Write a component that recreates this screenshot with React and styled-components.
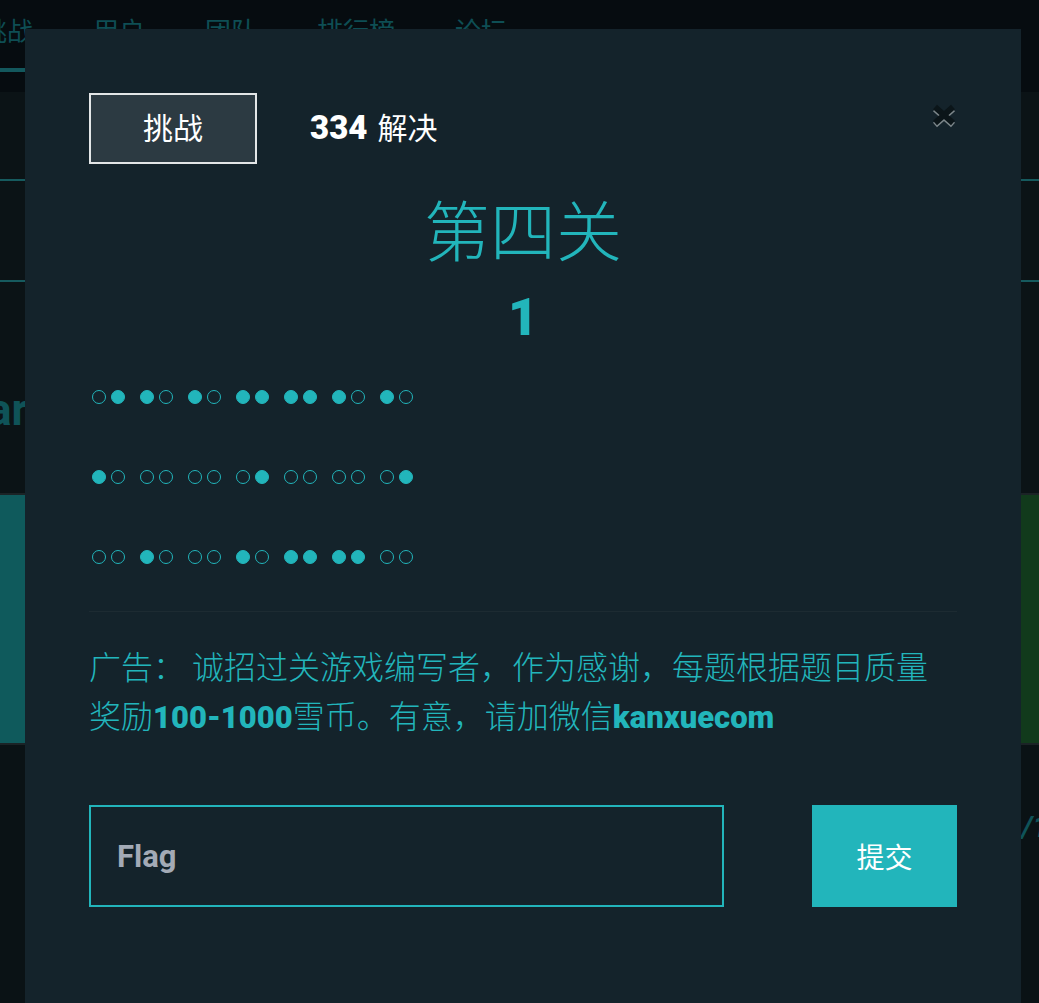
import React from 'react'
import styled, { createGlobalStyle } from 'styled-components'

const GlobalStyle = createGlobalStyle`
  html, body {
    margin: 0;
    padding: 0;
    background: #0a1215;
  }
  body {
    font-family: "Noto Sans CJK SC", "Noto Sans", sans-serif;
    overflow: hidden;
  }
`

const teal = '#22b5bb'
const numFont = `Roboto, "Noto Sans CJK SC", sans-serif`

const Page = styled.div`
  position: relative;
  width: 1039px;
  height: 1003px;
  overflow: hidden;
  background: #0a1215;
`

const Nav = styled.nav`
  height: 92px;
  background: #060c10;
  display: flex;
  align-items: flex-start;
  gap: 60px;
  margin-left: -19px;
`

const NavItem = styled.div`
  height: 72px;
  box-sizing: border-box;
  padding-top: 11px;
  font-size: 26px;
  color: #0e4e54;
  border-bottom: 4px solid ${p => (p.$active ? '#13585d' : 'transparent')};
  white-space: nowrap;
`

const Band = styled.div`
  height: ${p => p.$h}px;
  background: #0b1316;
`

const Rule = styled.div`
  height: 2px;
  background: #165a5e;
`

const Heading = styled.h1`
  margin: 0 0 0 -12px;
  height: 211px;
  display: flex;
  align-items: center;
  padding-top: 44px;
  box-sizing: border-box;
  font-family: ${numFont};
  font-weight: 700;
  font-size: 44px;
  color: #0f5358;
  background: #0b1316;
`

const Cards = styled.div`
  display: flex;
  justify-content: space-between;
  height: 252px;
  border-top: 2px solid #1b2326;
  border-bottom: 2px solid #1b2326;
  box-sizing: border-box;
`

const Card = styled.div`
  width: 48%;
  background: ${p => p.$color};
`

const Footer = styled.div`
  display: flex;
  justify-content: flex-end;
  padding-top: 64px;
  margin-right: -10px;
  font-family: ${numFont};
  font-weight: 700;
  font-style: italic;
  font-size: 30px;
  color: #0f5358;
`

const Modal = styled.div`
  position: absolute;
  left: 25px;
  top: 29px;
  width: 996px;
  height: 1000px;
  background: #14232b;
  box-sizing: border-box;
  padding: 64px 64px 0;
  color: ${teal};
`

const TopRow = styled.div`
  display: flex;
  align-items: center;
  gap: 53px;
`

const Tab = styled.div`
  width: 168px;
  height: 71px;
  box-sizing: border-box;
  border: 2px solid #e3e6e7;
  background: #2c3a42;
  color: #fff;
  font-size: 30px;
  padding-bottom: 5px;
  display: flex;
  align-items: center;
  justify-content: center;
`

const Solves = styled.div`
  color: #fff;
  font-size: 30px;
  display: flex;
  align-items: baseline;
  gap: 10px;
  margin-bottom: 5px;
  b {
    font-family: ${numFont};
    font-weight: 900;
    font-size: 33px;
  }
`

const Close = styled.button`
  margin-left: auto;
  align-self: flex-start;
  margin-top: 10px;
  width: 26px;
  height: 26px;
  padding: 0;
  border: none;
  background: transparent;
  display: flex;
`

const Title = styled.h2`
  margin: 18px 0 0;
  text-align: center;
  font-weight: 300;
  font-size: 66px;
  line-height: 90px;
`

const Value = styled.div`
  text-align: center;
  font-family: ${numFont};
  font-weight: 900;
  font-size: 52px;
  line-height: 60px;
  margin-top: 16px;
`

const Rows = styled.div`
  display: flex;
  flex-direction: column;
  gap: 66px;
  margin-top: 42px;
  padding-left: 3px;
`

const DotRow = styled.div`
  display: flex;
  gap: 15px;
`

const Pair = styled.div`
  display: flex;
  gap: 5px;
`

const Dot = styled.span`
  width: 14px;
  height: 14px;
  box-sizing: border-box;
  border-radius: 50%;
  border: 1.5px solid ${teal};
  background: ${p => (p.$on ? teal : 'transparent')};
`

const Divider = styled.hr`
  margin: 47px 0 0;
  border: none;
  height: 1px;
  background: #1d2b32;
`

const Ad = styled.p`
  margin: 29px 0 0;
  font-size: 32px;
  font-weight: 300;
  line-height: 49px;
  b {
    font-family: ${numFont};
    font-weight: 900;
    font-size: 31px;
    line-height: 1;
  }
`

const Form = styled.form`
  display: flex;
  justify-content: space-between;
  margin-top: 66px;
`

const FlagInput = styled.input`
  width: 635px;
  height: 102px;
  box-sizing: border-box;
  border: 2px solid ${teal};
  background: transparent;
  padding: 0 26px;
  font-family: ${numFont};
  font-weight: 700;
  font-size: 31px;
  outline: none;
  &::placeholder {
    color: #a3aab6;
  }
`

const Submit = styled.button`
  width: 145px;
  height: 102px;
  border: none;
  background: ${teal};
  color: #fff;
  font-family: "Noto Sans CJK SC", sans-serif;
  font-size: 28px;
`

const rows = [
  ['01', '10', '10', '11', '11', '10', '10'],
  ['10', '00', '00', '01', '00', '00', '01'],
  ['00', '10', '00', '10', '11', '11', '00'],
]

const CloseIcon = () => (
  <svg width="26" height="26" viewBox="0 0 26 26">
    <path d="M4 6 L22 22 M22 6 L4 22" stroke="#7d878b" strokeWidth="6" />
    <path d="M4 4 L22 20 M22 4 L4 20" stroke="#0b1519" strokeWidth="6" />
  </svg>
)

export default function App() {
  return (
    <Page>
      <GlobalStyle />
      <Nav>
        <NavItem $active>挑战</NavItem>
        <NavItem>用户</NavItem>
        <NavItem>团队</NavItem>
        <NavItem>排行榜</NavItem>
        <NavItem>论坛</NavItem>
      </Nav>
      <Band $h={87} />
      <Rule />
      <Band $h={99} />
      <Rule />
      <Heading>arena</Heading>
      <Cards>
        <Card $color="#0f5a5c" />
        <Card $color="#113a1c" />
      </Cards>
      <Footer>1/1</Footer>

      <Modal>
        <TopRow>
          <Tab>挑战</Tab>
          <Solves>
            <b>334</b>解决
          </Solves>
          <Close aria-label="close">
            <CloseIcon />
          </Close>
        </TopRow>
        <Title>第四关</Title>
        <Value>1</Value>
        <Rows>
          {rows.map((row, i) => (
            <DotRow key={i}>
              {row.map((pair, j) => (
                <Pair key={j}>
                  <Dot $on={pair[0] === '1'} />
                  <Dot $on={pair[1] === '1'} />
                </Pair>
              ))}
            </DotRow>
          ))}
        </Rows>
        <Divider />
        <Ad>
          广告： 诚招过关游戏编写者，作为感谢，每题根据题目质量奖励<b>100-1000</b>雪币。有意，请加微信<b>kanxuecom</b>
        </Ad>
        <Form onSubmit={e => e.preventDefault()}>
          <FlagInput placeholder="Flag" />
          <Submit type="submit">提交</Submit>
        </Form>
      </Modal>
    </Page>
  )
}
